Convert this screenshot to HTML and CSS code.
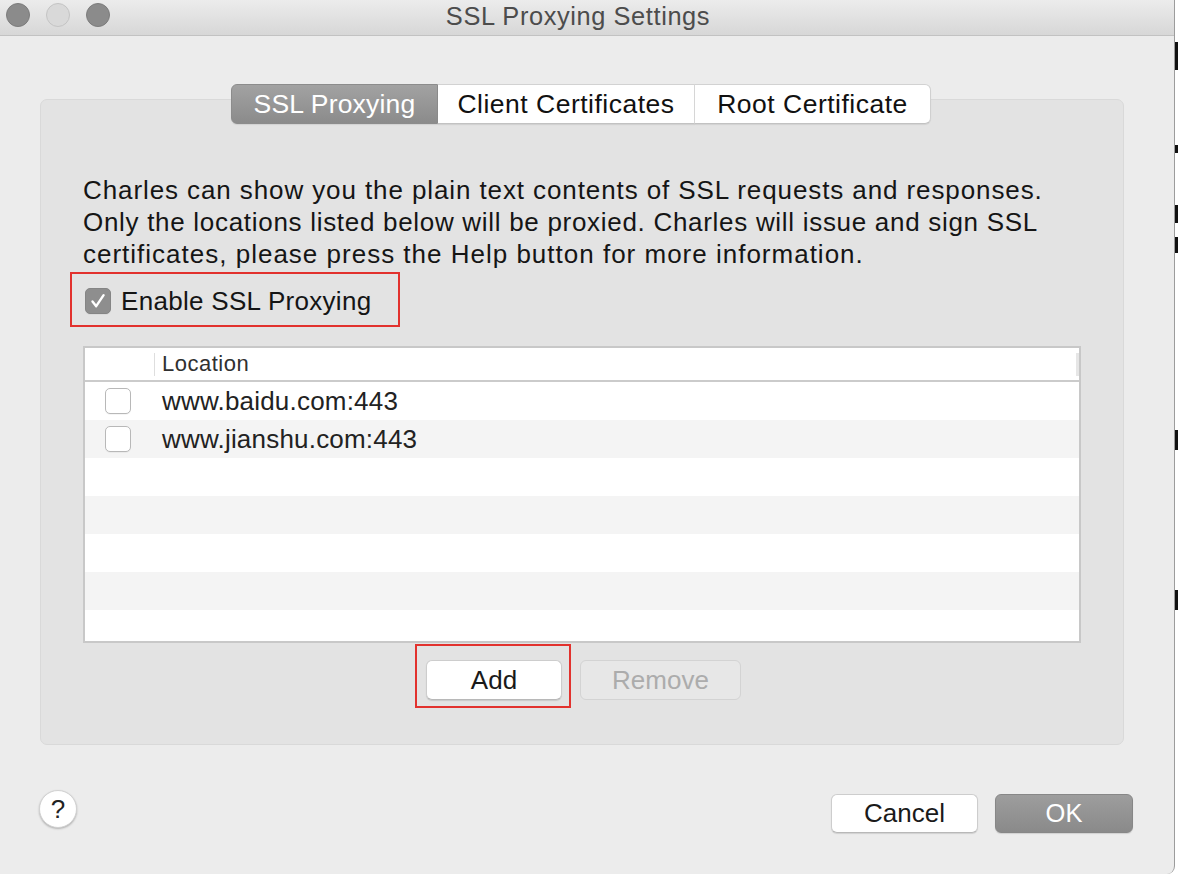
FILE: index.html
```html
<!DOCTYPE html>
<html lang="en">
<head>
<meta charset="utf-8">
<title>SSL Proxying Settings</title>
<link rel="stylesheet" href="styles.css">
</head>
<body>
<div class="screen">
  <div class="window">
    <div class="titlebar">
      <div class="lights">
        <span class="light dark"></span>
        <span class="light pale"></span>
        <span class="light dark"></span>
      </div>
      <div class="title">SSL Proxying Settings</div>
    </div>
    <div class="body">
      <div class="tabs">
        <div class="tab tab-ssl selected">SSL Proxying</div>
        <div class="tab tab-client">Client Certificates</div>
        <div class="tab tab-root">Root Certificate</div>
      </div>
      <div class="group">
        <p class="desc"><span class="line l1">Charles can show you the plain text contents of SSL requests and responses.</span><br><span class="line l2">Only the locations listed below will be proxied. Charles will issue and sign SSL</span><br><span class="line l3">certificates, please press the Help button for more information.</span></p>
        <div class="enable-box">
          <span class="check checked">
            <svg viewBox="0 0 26 26" width="26" height="26"><path d="M7.5 13.5 L11.2 18.2 L18.6 7.2" fill="none" stroke="#fff" stroke-width="2.4" stroke-linecap="round" stroke-linejoin="round"/></svg>
          </span>
          <span class="enable-label">Enable SSL Proxying</span>
        </div>
        <div class="table">
          <div class="thead">
            <div class="col-check"></div>
            <div class="col-loc">Location</div>
            <div class="thead-end"></div>
          </div>
          <div class="tbody">
            <div class="row">
              <div class="col-check"><span class="check"></span></div>
              <div class="col-loc">www.baidu.com:443</div>
            </div>
            <div class="row alt">
              <div class="col-check"><span class="check"></span></div>
              <div class="col-loc">www.jianshu.com:443</div>
            </div>
            <div class="row"></div>
            <div class="row alt"></div>
            <div class="row"></div>
            <div class="row alt"></div>
          </div>
        </div>
        <div class="btn-row">
          <div class="add-box"><button class="btn btn-add">Add</button></div>
          <button class="btn btn-remove" disabled>Remove</button>
        </div>
      </div>
      <div class="footer">
        <button class="help">?</button>
        <div class="spacer"></div>
        <button class="btn btn-cancel">Cancel</button>
        <button class="btn btn-ok">OK</button>
      </div>
    </div>
  </div>
  <div class="edge">
    <span class="mark m1"></span>
    <span class="mark m2"></span>
    <span class="mark m3"></span>
    <span class="mark m4"></span>
    <span class="mark m5"></span>
    <span class="mark m6"></span>
  </div>
</div>
</body>
</html>
```
FILE: styles.css
```css
html, body {
  margin: 0;
  padding: 0;
  width: 1178px;
  height: 874px;
  overflow: hidden;
  background: #ffffff;
  font-family: "Liberation Sans", Arial, sans-serif;
}

.screen {
  display: flex;
  width: 1178px;
  height: 874px;
}

.window {
  width: 1174px;
  height: 874px;
  border-right: 1px solid #9c9c9c;
  background: #ececec;
  display: flex;
  flex-direction: column;
  border-bottom-right-radius: 8px;
  overflow: hidden;
}

.titlebar {
  height: 35px;
  border-bottom: 1px solid #c2c2c2;
  background: linear-gradient(#ececec, #d7d7d7);
  display: flex;
  align-items: center;
  position: relative;
}

.lights {
  display: flex;
  gap: 16px;
  padding-left: 6px;
  margin-top: -6px;
}

.light {
  width: 24px;
  height: 24px;
  border-radius: 50%;
  box-sizing: border-box;
}

.light.dark {
  background: #8b8b8b;
  border: 1px solid #7c7c7c;
}

.light.pale {
  background: #d9d9d9;
  border: 1px solid #c4c4c4;
}

.title {
  flex: 1;
  text-align: center;
  font-size: 25.4px;
  letter-spacing: 0.6px;
  color: #4c4c4c;
  margin-left: -128px;
  margin-top: -3px;
}

.body {
  flex: 1;
  padding: 48px 50px 0 40px;
  display: flex;
  flex-direction: column;
}

.tabs {
  display: flex;
  justify-content: center;
  position: relative;
  z-index: 1;
  height: 40px;
  margin-left: -2px;
}

.tab {
  box-sizing: border-box;
  height: 40px;
  display: flex;
  align-items: center;
  justify-content: center;
  font-size: 26.5px;
  letter-spacing: 0.5px;
  color: #111;
  background: #ffffff;
  border-top: 1px solid #d2d2d2;
  border-bottom: 1px solid #c2c2c2;
  border-right: 1px solid #d8d8d8;
  box-shadow: 0 1px 1px rgba(0, 0, 0, 0.08);
}

.tab-ssl {
  width: 207px;
  border-radius: 6px 0 0 6px;
  border: 1px solid #8c8c8c;
  letter-spacing: 0.2px;
}

.tab-client {
  width: 257px;
}

.tab-root {
  width: 236px;
  border-radius: 0 6px 6px 0;
  border-right: 1px solid #d0d0d0;
}

.tab.selected {
  background: linear-gradient(#a2a2a2, #8b8b8b);
  color: #ffffff;
}

.group {
  margin-top: -25px;
  background: #e3e3e3;
  border: 1px solid #d9d9d9;
  border-radius: 7px;
  padding: 74px 42px 36px 42px;
  display: flex;
  flex-direction: column;
}

.desc {
  margin: 0;
  font-size: 26px;
  line-height: 32px;
  letter-spacing: 0.9px;
  color: #151515;
  white-space: nowrap;
}

.desc .l2 {
  letter-spacing: 0.7px;
}

.desc .l3 {
  letter-spacing: 1px;
}

.enable-box {
  margin-top: 2px;
  margin-left: -13px;
  width: 330px;
  height: 55px;
  box-sizing: border-box;
  border: 2px solid #e2322e;
  display: flex;
  align-items: center;
  padding: 3px 0 0 13px;
  gap: 10px;
}

.check {
  width: 26px;
  height: 26px;
  box-sizing: border-box;
  border-radius: 5px;
  background: #ffffff;
  border: 1px solid #b8b8b8;
  display: block;
  box-shadow: 0 1px 0 rgba(0, 0, 0, 0.04);
}

.check.checked {
  background: #8e8e8e;
  border: 1px solid #858585;
}

.check svg {
  display: block;
  margin: -1px;
}

.enable-label {
  font-size: 26px;
  letter-spacing: 0.3px;
  color: #151515;
}

.table {
  margin-top: 19px;
  width: 998px;
  box-sizing: border-box;
  border: 2px solid #c8c8c8;
  background: #ffffff;
  display: flex;
  flex-direction: column;
}

.thead {
  height: 32px;
  border-bottom: 2px solid #cbcbcb;
  display: flex;
  align-items: center;
  position: relative;
}

.col-check {
  width: 70px;
  flex: none;
  box-sizing: border-box;
  padding-left: 20px;
  display: flex;
  align-items: center;
}

.thead .col-check {
  height: 23px;
  border-right: 1px solid #dedede;
}

.col-loc {
  padding-left: 7px;
  color: #222;
}

.thead .col-loc {
  font-size: 22px;
  letter-spacing: 0.5px;
  color: #303030;
  flex: 1;
}

.thead-end {
  width: 3px;
  height: 23px;
  background: #e6e6e6;
  margin-right: 0;
}

.tbody {
  height: 259px;
  display: flex;
  flex-direction: column;
}

.row {
  height: 38px;
  flex: none;
  display: flex;
  align-items: center;
  background: #ffffff;
}

.row.alt {
  background: #f4f4f4;
}

.row .col-loc {
  font-size: 26px;
  letter-spacing: 0.2px;
  color: #222;
}

.btn-row {
  display: flex;
  justify-content: center;
  align-items: flex-start;
  margin-top: 1px;
  padding-right: 8px;
}

.add-box {
  border: 2px solid #e2322e;
  padding: 14px 7px 6px 9px;
}

.btn {
  font-family: "Liberation Sans", Arial, sans-serif;
  box-sizing: border-box;
  height: 40px;
  border-radius: 6px;
  font-size: 26px;
  padding: 0;
  display: flex;
  align-items: center;
  justify-content: center;
  background: #ffffff;
  color: #1a1a1a;
  border: 1px solid #cdcdcd;
  border-bottom-color: #b8b8b8;
  box-shadow: 0 1px 1px rgba(0, 0, 0, 0.12);
}

.btn-add {
  width: 136px;
}

.btn-remove {
  width: 161px;
  margin-left: 9px;
  margin-top: 16px;
  background: #e7e7e7;
  color: #acacac;
  border: 1px solid #d3d3d3;
  box-shadow: none;
}

.footer {
  display: flex;
  align-items: flex-start;
  padding-top: 49px;
}

.help {
  width: 38px;
  height: 38px;
  border-radius: 50%;
  border: 1px solid #d2d2d2;
  background: #ffffff;
  box-shadow: 0 1px 2px rgba(0, 0, 0, 0.25);
  font-family: "Liberation Sans", Arial, sans-serif;
  font-size: 26px;
  color: #222;
  padding: 0;
  margin-left: -1px;
  margin-top: -4px;
  display: flex;
  align-items: center;
  justify-content: center;
}

.spacer {
  flex: 1;
}

.btn-cancel {
  width: 147px;
  height: 39px;
}

.btn-ok {
  width: 138px;
  height: 39px;
  margin-left: 17px;
  margin-right: -9px;
  background: linear-gradient(#9d9d9d, #8a8a8a);
  border: 1px solid #878787;
  color: #ffffff;
  font-size: 25.5px;
}

.edge {
  flex: 1;
  position: relative;
  background: #ffffff;
}

.mark {
  position: absolute;
  left: 0;
  width: 3px;
  background: #111;
}

.m1 { top: 42px; height: 28px; }
.m2 { top: 145px; height: 8px; }
.m3 { top: 205px; height: 18px; }
.m4 { top: 237px; height: 16px; }
.m5 { top: 430px; height: 20px; }
.m6 { top: 590px; height: 20px; }
```
